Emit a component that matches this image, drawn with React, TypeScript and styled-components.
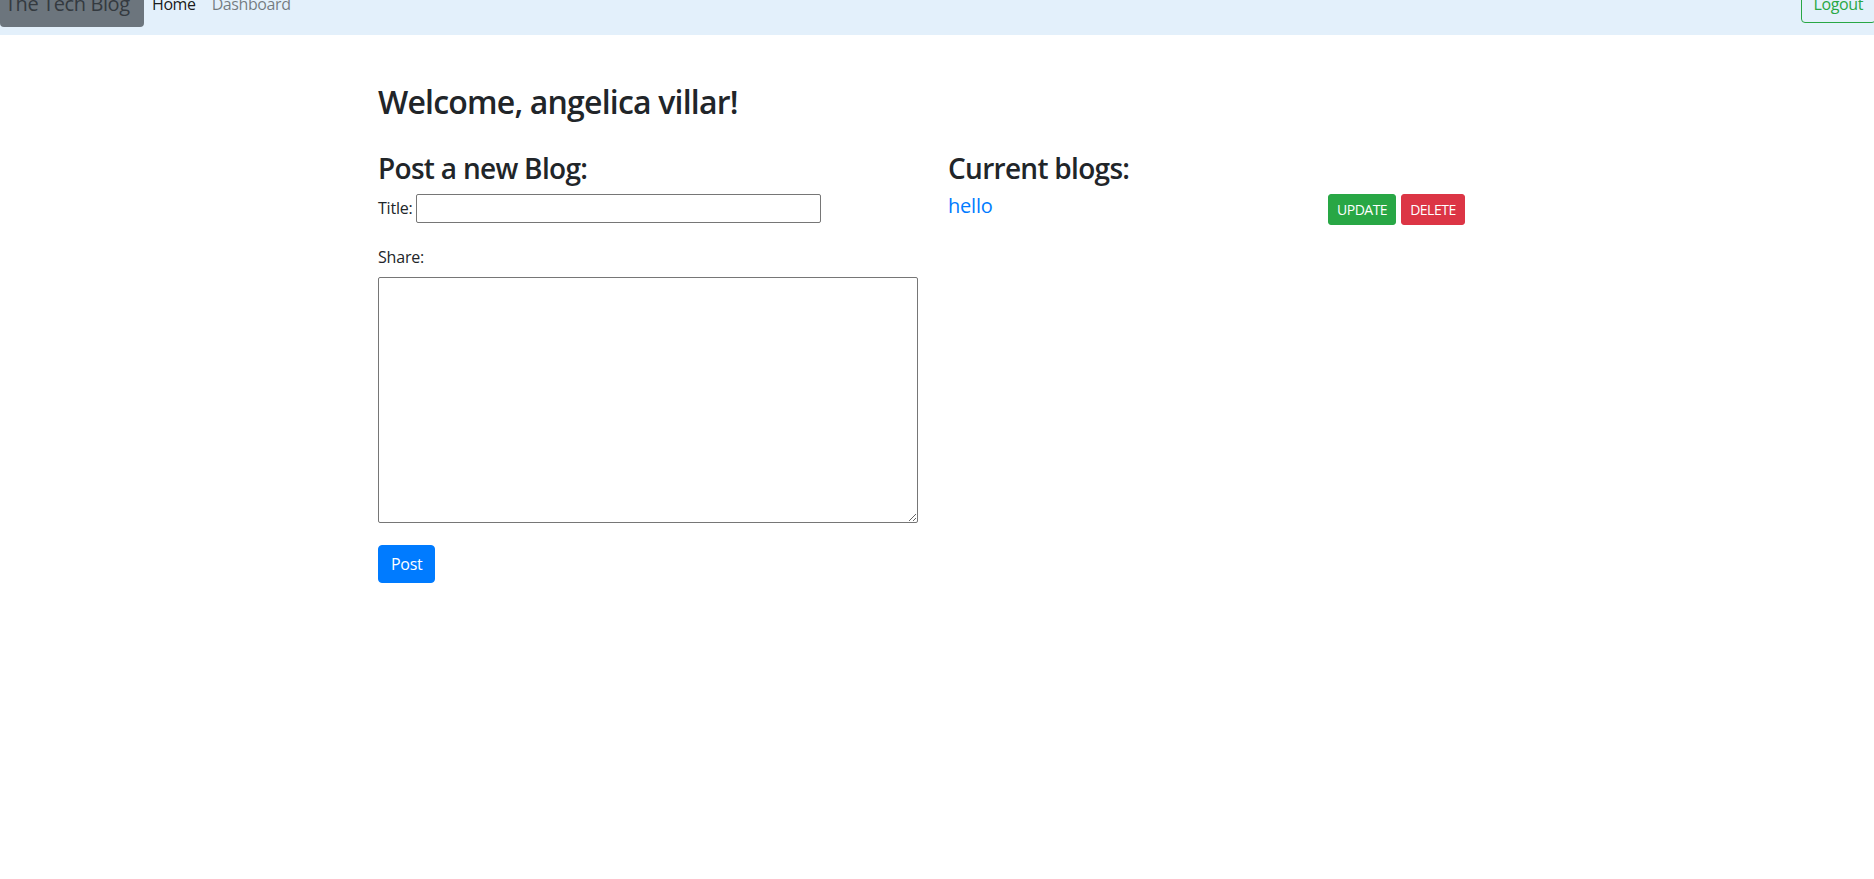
import React from "react";
import styled, { createGlobalStyle } from "styled-components";

const GlobalStyle = createGlobalStyle`
  html, body {
    margin: 0;
    padding: 0;
    background: #ffffff;
    overflow: hidden;
  }
  body {
    font-family: "Open Sans", "Noto Sans", "Liberation Sans", sans-serif;
    font-size: 16px;
    line-height: 1.5;
    color: #212529;
  }
  * { box-sizing: border-box; }
`;

const NavBar = styled.nav`
  height: 35px;
  background: #e3f0fb;
  overflow: hidden;
`;

const NavInner = styled.div`
  display: flex;
  align-items: flex-start;
  margin-top: -14px;
  margin-right: -2px;
`;

const Brand = styled.a`
  display: block;
  width: 144px;
  margin-top: 3px;
  padding: 0 0 8px 5px;
  background: #6c757d;
  color: #343a40;
  border-radius: 4px;
  font-size: 20px;
  line-height: 30px;
  letter-spacing: -0.4px;
  white-space: nowrap;
  text-decoration: none;
`;

const NavLink = styled.a<{ $active?: boolean }>`
  display: block;
  margin-top: 6px;
  padding: 0 8px;
  font-size: 16px;
  line-height: 24px;
  letter-spacing: -0.4px;
  color: ${(p) => (p.$active ? "rgba(0,0,0,0.9)" : "rgba(0,0,0,0.5)")};
  text-decoration: none;
`;

const Spacer = styled.div`
  flex: 1;
`;

const OutlineButton = styled.button`
  font-family: inherit;
  font-size: 16px;
  line-height: 24px;
  letter-spacing: -0.4px;
  padding: 5px 12px 6px;
  border: 1px solid #28a745;
  border-radius: 4px;
  background: transparent;
  color: #28a745;
`;

const Container = styled.main`
  width: 1140px;
  margin-left: calc(50% - 574px);
  padding: 0 15px;
`;

const Welcome = styled.h2`
  margin: 48px 0 0;
  font-size: 32px;
  font-weight: 600;
  line-height: 1.2;
  letter-spacing: -0.8px;
`;

const Columns = styled.div`
  display: grid;
  grid-template-columns: 540px 540px;
  column-gap: 30px;
  margin-top: 31px;
`;

const Column = styled.section`
  display: flex;
  flex-direction: column;
  align-items: flex-start;
`;

const SectionTitle = styled.h3`
  margin: 0 0 8px;
  font-size: 28px;
  font-weight: 600;
  line-height: 1.2;
  letter-spacing: -0.7px;
`;

const FieldRow = styled.div`
  display: flex;
  align-items: center;
  gap: 3px;
`;

const Label = styled.label`
  font-size: 16px;
  line-height: 24px;
  letter-spacing: -0.2px;
`;

const TextInput = styled.input`
  width: 405px;
  height: 29px;
  border: 1px solid #767676;
  border-radius: 2px;
  padding: 1px 2px;
  font-family: inherit;
`;

const ShareLabel = styled(Label)`
  display: block;
  margin-top: 22px;
  margin-bottom: 8px;
`;

const TextArea = styled.textarea`
  width: 540px;
  height: 246px;
  border: 1px solid #767676;
  border-radius: 2px;
  font-family: inherit;
`;

const PrimaryButton = styled.button`
  margin-top: 22px;
  font-family: inherit;
  font-size: 16px;
  line-height: 24px;
  letter-spacing: -0.3px;
  padding: 6px 12px;
  border: 1px solid #007bff;
  border-radius: 4px;
  background: #007bff;
  color: #ffffff;
`;

const BlogRow = styled.div`
  display: grid;
  grid-template-columns: 380px 1fr;
  width: 100%;
`;

const BlogLink = styled.a`
  font-size: 20px;
  line-height: 1.2;
  font-weight: 500;
  letter-spacing: -0.2px;
  color: #007bff;
  text-decoration: none;
`;

const Actions = styled.div`
  display: flex;
  gap: 5px;
`;

const SmallButton = styled.button<{ $variant: "success" | "danger" }>`
  font-family: inherit;
  font-size: 14px;
  line-height: 21px;
  letter-spacing: -0.5px;
  padding: 4px 8px;
  border-radius: 3px;
  color: #ffffff;
  text-transform: uppercase;
  border: 1px solid ${(p) => (p.$variant === "success" ? "#28a745" : "#dc3545")};
  background: ${(p) => (p.$variant === "success" ? "#28a745" : "#dc3545")};
`;

export default function App() {
  return (
    <>
      <GlobalStyle />
      <NavBar>
        <NavInner>
          <Brand href="#">The Tech Blog</Brand>
          <NavLink href="#" $active>
            Home
          </NavLink>
          <NavLink href="#">Dashboard</NavLink>
          <Spacer />
          <OutlineButton>Logout</OutlineButton>
        </NavInner>
      </NavBar>
      <Container>
        <Welcome>Welcome, angelica villar!</Welcome>
        <Columns>
          <Column>
            <SectionTitle>Post a new Blog:</SectionTitle>
            <FieldRow>
              <Label htmlFor="title">Title:</Label>
              <TextInput id="title" type="text" />
            </FieldRow>
            <ShareLabel htmlFor="share">Share:</ShareLabel>
            <TextArea id="share" />
            <PrimaryButton>Post</PrimaryButton>
          </Column>
          <Column>
            <SectionTitle>Current blogs:</SectionTitle>
            <BlogRow>
              <div>
                <BlogLink href="#">hello</BlogLink>
              </div>
              <Actions>
                <SmallButton $variant="success">Update</SmallButton>
                <SmallButton $variant="danger">Delete</SmallButton>
              </Actions>
            </BlogRow>
          </Column>
        </Columns>
      </Container>
    </>
  );
}
